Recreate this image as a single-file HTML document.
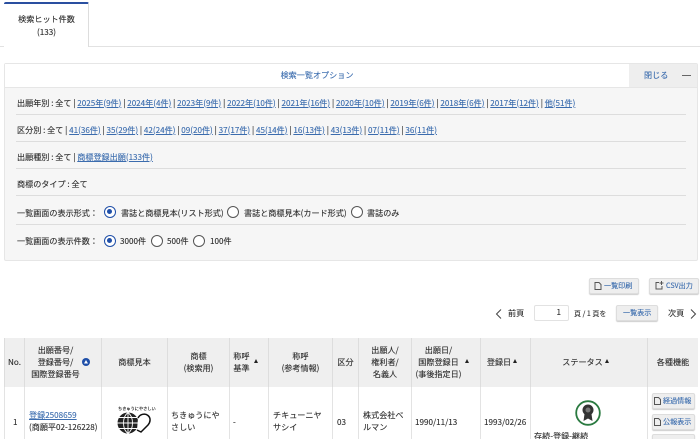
<!DOCTYPE html>
<html lang="ja"><head><meta charset="utf-8"><title>検索結果</title>
<style>
html,body{margin:0;padding:0;background:#fff}
#p{position:relative;width:700px;height:439px;overflow:hidden;background:#fff;font-family:"Noto Sans CJK JP","Liberation Sans",sans-serif;font-size:8.1px;color:#2e2e2e;line-height:12px;-webkit-text-stroke:.12px}
#p div,#p svg{position:absolute}
.t{white-space:nowrap;margin-top:1px}
.w{margin-top:1px}
a{color:#3b6cae;text-decoration:underline}
.sep{left:16px;width:670px;height:1px;background:#ddd}
.r{width:12px;height:12px;box-sizing:border-box;border:1px solid #555;border-radius:50%;background:#fff}
.r.on{border:1.3px solid #1f4fa8}
.r.on:after{content:"";position:absolute;left:2.2px;top:2.2px;width:5px;height:5px;border-radius:50%;background:#1f4fa8}
.btn{background:#eee;border:1px solid #ddd;border-radius:2px;box-shadow:0 1px 1px #ccc;box-sizing:border-box}
.bt{color:#3b6cae;font-size:7.1px;white-space:nowrap}
.th{top:338px;height:49px;background:#efefef;border-left:1px solid #ddd;box-sizing:border-box;display:flex;align-items:center;justify-content:center;text-align:center;line-height:12px;white-space:nowrap}
.td{top:387px;height:52px;background:#fff;border-left:1px solid #e3e3e3;box-sizing:border-box}
.tri{width:0;height:0;border-left:2.5px solid transparent;border-right:2.5px solid transparent;border-bottom:4px solid #222}
</style></head><body><div id="p">

<div style="left:0;top:46px;width:700px;height:1px;background:#e2e2e2"></div>
<div style="left:4px;top:2px;width:85px;height:45px;background:#fff;border-right:1px solid #ddd;box-sizing:border-box;border-top:2px solid #2a4fa0;border-radius:2px 2px 0 0"></div>
<div class="t" style="left:4px;top:13px;width:85px;text-align:center">検索ヒット件数</div>
<div class="t" style="left:4px;top:26px;width:85px;text-align:center">(133)</div>

<div style="left:4px;top:63px;width:694px;height:198px;background:#f6f6f6;border:1px solid #e6e6e6;box-sizing:border-box;border-radius:2px"></div>
<div style="left:5px;top:64px;width:624px;height:23px;background:#fff;border-bottom:1px solid #e6e6e6"></div>
<div style="left:629px;top:64px;width:68px;height:23px;background:#eee;border-bottom:1px solid #e6e6e6"></div>
<div class="t" style="left:5px;top:69px;width:624px;text-align:center;color:#3b6cae">検索一覧オプション</div>
<div class="t" style="left:644px;top:69px;color:#3b6cae">閉じる</div>
<div style="left:682px;top:75px;width:9px;height:1px;background:#666"></div>

<div class="t" style="left:17px;top:97px">出願年別 : 全て | <a>2025年(9件)</a> | <a>2024年(4件)</a> | <a>2023年(9件)</a> | <a>2022年(10件)</a> | <a>2021年(16件)</a> | <a>2020年(10件)</a> | <a>2019年(6件)</a> | <a>2018年(6件)</a> | <a>2017年(12件)</a> | <a>他(51件)</a></div>
<div class="sep" style="top:114px"></div>
<div class="t" style="left:17px;top:124px">区分別 : 全て | <a>41(36件)</a> | <a>35(29件)</a> | <a>42(24件)</a> | <a>09(20件)</a> | <a>37(17件)</a> | <a>45(14件)</a> | <a>16(13件)</a> | <a>43(13件)</a> | <a>07(11件)</a> | <a>36(11件)</a></div>
<div class="sep" style="top:141px"></div>
<div class="t" style="left:17px;top:151px">出願種別 : 全て | <a>商標登録出願(133件)</a></div>
<div class="sep" style="top:168px"></div>
<div class="t" style="left:17px;top:178px">商標のタイプ : 全て</div>
<div class="sep" style="top:195px"></div>
<div class="t" style="left:17px;top:207px">一覧画面の表示形式：</div>
<div class="r on" style="left:104px;top:206px"></div>
<div class="t" style="left:121px;top:207px">書誌と商標見本(リスト形式)</div>
<div class="r" style="left:227px;top:206px"></div>
<div class="t" style="left:244px;top:207px">書誌と商標見本(カード形式)</div>
<div class="r" style="left:351px;top:206px"></div>
<div class="t" style="left:367px;top:207px">書誌のみ</div>
<div class="sep" style="top:224px"></div>
<div class="t" style="left:17px;top:235px">一覧画面の表示件数：</div>
<div class="r on" style="left:104px;top:235px"></div>
<div class="t" style="left:120px;top:235px">3000件</div>
<div class="r" style="left:151px;top:235px"></div>
<div class="t" style="left:167px;top:235px">500件</div>
<div class="r" style="left:193px;top:235px"></div>
<div class="t" style="left:210px;top:235px">100件</div>

<div class="btn" style="left:589px;top:278px;width:50px;height:16px"></div>
<div class="bt" style="left:604px;top:280px">一覧印刷</div>
<svg style="left:594px;top:282px" width="8" height="8" viewBox="0 0 8 8"><path d="M1 .5H5L7 2.500V7.500H1Z" fill="none" stroke="#555"/></svg>
<div class="btn" style="left:649px;top:278px;width:50px;height:16px"></div>
<div class="bt" style="left:666px;top:280px">CSV出力</div>
<svg style="left:655px;top:281px" width="9" height="9" viewBox="0 0 9 9"><path d="M4 1.500H1V8H7V5M6.500 0V4M4.500 2H8.500" fill="none" stroke="#555"/></svg>

<svg style="left:495px;top:309px" width="8" height="10" viewBox="0 0 8 10"><path d="M6 .5L1.500 5L6 9.500" fill="none" stroke="#444"/></svg>
<div class="t" style="left:508px;top:307px">前頁</div>
<div style="left:534px;top:305px;width:35px;height:16px;background:#fff;border:1px solid #e2e2e2;border-radius:2px;box-sizing:border-box;text-align:right;padding-right:7px;line-height:14px">1</div>
<div class="t" style="left:574px;top:307px;font-size:7px">頁 / 1 頁を</div>
<div class="btn" style="left:616px;top:305px;width:42px;height:16px"></div>
<div class="bt" style="left:623px;top:307px">一覧表示</div>
<div class="t" style="left:668px;top:307px">次頁</div>
<svg style="left:689px;top:309px" width="8" height="10" viewBox="0 0 8 10"><path d="M2 .5L6.500 5L2 9.500" fill="none" stroke="#444"/></svg>

<div class="th" style="left:4px;width:20px">No.</div>
<div class="th" style="left:24px;width:77px;padding-right:15px">出願番号/<br>登録番号/<br>国際登録番号</div>
<svg style="left:82px;top:358px" width="8" height="8" viewBox="0 0 8 8"><circle cx="4" cy="4" r="4" fill="#1f4fa8"/><path d="M4 2L6 5.500H2Z" fill="#fff"/></svg>
<div class="th" style="left:101px;width:66px">商標見本</div>
<div class="th" style="left:167px;width:62px">商標<br>(検索用)</div>
<div class="th" style="left:229px;width:39px;padding-right:15px">称呼<br>基準</div>
<div class="th" style="left:268px;width:64px">称呼<br>(参考情報)</div>
<div class="th" style="left:332px;width:26px">区分</div>
<div class="th" style="left:358px;width:53px">出願人/<br>権利者/<br>名義人</div>
<div class="th" style="left:411px;width:69px;padding-right:15px">出願日/<br>国際登録日<br>(事後指定日)</div>
<div class="th" style="left:480px;width:50px;padding-right:13px">登録日</div>
<div class="th" style="left:530px;width:117px;padding-right:13px">ステータス</div>
<div class="th" style="left:647px;width:51px">各種機能</div>
<div class="tri" style="left:253.500px;top:359px"></div>
<div class="tri" style="left:464.500px;top:359px"></div>
<div class="tri" style="left:512.500px;top:359px"></div>
<div class="tri" style="left:604.500px;top:359px"></div>

<div class="td" style="left:4px;width:20px"></div>
<div class="td" style="left:24px;width:77px"></div>
<div class="td" style="left:101px;width:66px"></div>
<div class="td" style="left:167px;width:62px"></div>
<div class="td" style="left:229px;width:39px"></div>
<div class="td" style="left:268px;width:64px"></div>
<div class="td" style="left:332px;width:26px"></div>
<div class="td" style="left:358px;width:53px"></div>
<div class="td" style="left:411px;width:69px"></div>
<div class="td" style="left:480px;width:50px"></div>
<div class="td" style="left:530px;width:117px"></div>
<div class="td" style="left:647px;width:51px"></div>

<div class="t" style="left:13px;top:416px">1</div>
<div class="t" style="left:29px;top:409px"><a>登録2508659</a></div>
<div class="t" style="left:29px;top:421px">(商願平02-126228)</div>
<div class="t" style="left:118px;top:406px;font-size:4.2px;line-height:5px;color:#111">ちきゅうにやさしい</div>
<svg style="left:117px;top:411px" width="35" height="24" viewBox="0 0 35 24">
<circle cx="11" cy="12" r="10.500" fill="#222"/>
<path d="M.5 12H21.500M2 6.500H20M2 17.500H20M11 1.500V22.500M11 1.500C5 6 5 18 11 22.500M11 1.500C17 6 17 18 11 22.500" stroke="#fff" stroke-width=".9" fill="none"/>
<path d="M21 7C23 3 28 2 31 4.500C34 7 33.500 11 31 14L24 21L20 19" fill="#fff" stroke="#111" stroke-width="1.500"/>
</svg>
<div class="w" style="left:171px;top:409px;width:50px">ちきゅうにやさしい</div>
<div class="t" style="left:233px;top:416px">-</div>
<div class="w" style="left:273px;top:409px;width:50px">チキューニヤサシイ</div>
<div class="t" style="left:337px;top:416px">03</div>
<div class="w" style="left:363px;top:409px;width:42px">株式会社ベルマン</div>
<div class="t" style="left:415px;top:416px">1990/11/13</div>
<div class="t" style="left:484px;top:416px">1993/02/26</div>

<svg style="left:575px;top:400px" width="27" height="27" viewBox="0 0 27 27">
<circle cx="13" cy="13" r="11.800" fill="#fff" stroke="#2a7a40" stroke-width="1.800"/>
<circle cx="13" cy="10" r="5.500" fill="#333"/><circle cx="13" cy="10" r="2.500" fill="#777"/>
<path d="M9.500 14L8.500 21L13 18.500L17.500 21L16.500 14Z" fill="#333"/>
</svg>
<div class="t" style="left:534px;top:430px">存続-登録-継続</div>

<div class="btn" style="left:652px;top:393px;width:43px;height:16px"></div>
<div class="bt" style="left:663px;top:395px">経過情報</div>
<svg style="left:654px;top:397px" width="7" height="8" viewBox="0 0 7 8"><path d="M.5 .5H4.500L6.500 2.500V7.500H.5Z" fill="none" stroke="#555"/></svg>
<div class="btn" style="left:652px;top:414px;width:43px;height:16px"></div>
<div class="bt" style="left:663px;top:416px">公報表示</div>
<svg style="left:654px;top:418px" width="7" height="8" viewBox="0 0 7 8"><path d="M.5 .5H4.500L6.500 2.500V7.500H.5Z" fill="none" stroke="#555"/></svg>
<div class="btn" style="left:652px;top:434px;width:43px;height:16px"></div>

</div></body></html>
